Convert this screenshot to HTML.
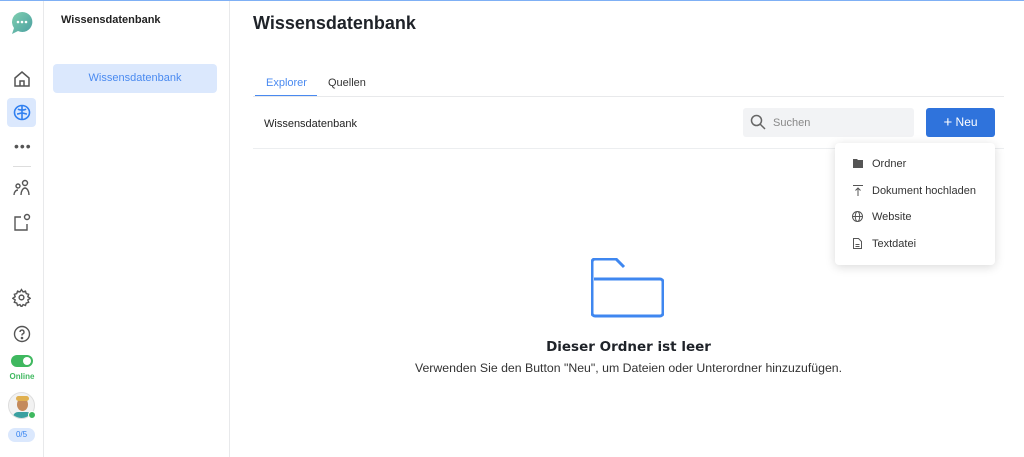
<!DOCTYPE html>
<html><head><meta charset="utf-8"><style>
*{box-sizing:border-box;margin:0;padding:0}
body{width:1024px;height:457px;overflow:hidden;background:#fff;font-family:"Liberation Sans",sans-serif;color:#1f2329;position:relative}
.top{position:absolute;left:0;top:0;width:1024px;height:1px;background:#7fb0f5}
.rail{position:absolute;left:0;top:1px;width:44px;height:456px;border-right:1px solid #e8e9eb}
.panel{position:absolute;left:44px;top:1px;width:186px;height:456px;border-right:1px solid #e8e9eb}
.ab{position:absolute}
svg{display:block}
</style></head><body>
<div class="top"></div>
<div class="rail">
 <svg class="ab" style="left:11px;top:10px" width="22" height="25" viewBox="0 0 22 25"><defs><linearGradient id="g" x1="0" y1="0" x2="1" y2="1"><stop offset="0" stop-color="#7fcfb0"/><stop offset="1" stop-color="#4a9ea0"/></linearGradient></defs><path d="M11 1a10 10 0 1 1-4 19l-6 3 2-6A10 10 0 0 1 11 1z" fill="url(#g)"/><circle cx="7" cy="11" r="1.3" fill="#fff"/><circle cx="11" cy="11" r="1.3" fill="#fff"/><circle cx="15" cy="11" r="1.3" fill="#fff"/></svg>
 <svg class="ab" style="left:13px;top:69px" width="18" height="18" viewBox="0 0 18 18" fill="none" stroke="#555" stroke-width="1.5"><path d="M2 8l7-6 7 6v8H2z"/><path d="M7 16v-5h4v5"/></svg>
 <div class="ab" style="left:7px;top:97px;width:29px;height:29px;background:#dbe8fd;border-radius:4px"></div>
 <svg class="ab" style="left:13px;top:103px" width="18" height="17" viewBox="0 0 18 17" fill="none" stroke="#2f7ff0" stroke-width="1.6"><ellipse cx="9" cy="8.5" rx="7.5" ry="7"/><path d="M9 2v13M5 5c1 1 2 1 4 1M13 5c-1 1-2 1-4 1M4 10c2 0 3-1 5-1M14 10c-2 0-3-1-5-1"/></svg>
 <div class="ab" style="left:14px;top:141px;font-size:14px;letter-spacing:1px;color:#555;line-height:8px">•••</div>
 <div class="ab" style="left:13px;top:165px;width:18px;height:1px;background:#ddd"></div>
 <svg class="ab" style="left:13px;top:178px" width="18" height="17" viewBox="0 0 18 17" fill="none" stroke="#555" stroke-width="1.4"><circle cx="12" cy="4" r="2.5"/><circle cx="5" cy="7" r="2"/><path d="M8 16c0-4 2-7 4-7s4 3 4 7M1 16c0-3 2-5 4-5"/></svg>
 <svg class="ab" style="left:13px;top:212px" width="18" height="18" viewBox="0 0 18 18" fill="none" stroke="#555" stroke-width="1.4"><path d="M8 4H2v13h12v-6"/><circle cx="14" cy="4" r="2.5"/></svg>
 <svg class="ab" style="left:12px;top:287px" width="19" height="19" viewBox="0 0 24 24" fill="none" stroke="#555" stroke-width="1.8"><circle cx="12" cy="12" r="3"/><path d="M12 2l2 3 3-1 1 3 3 1-1 3 3 2-3 2 1 3-3 1-1 3-3-1-2 3-2-3-3 1-1-3-3-1 1-3-3-2 3-2-1-3 3-1 1-3 3 1z"/></svg>
 <svg class="ab" style="left:13px;top:324px" width="18" height="18" viewBox="0 0 18 18" fill="none" stroke="#555" stroke-width="1.4"><circle cx="9" cy="9" r="7.5"/><path d="M7 7a2 2 0 1 1 2.5 2c-.5.2-.5.7-.5 1.5"/><circle cx="9" cy="13" r=".6" fill="#555"/></svg>
 <div class="ab" style="left:11px;top:354px;width:22px;height:12px;border-radius:6px;background:#3fb85f"><div style="position:absolute;right:2px;top:2px;width:8px;height:8px;border-radius:50%;background:#fff"></div></div>
 <div class="ab" style="left:0;top:371px;width:44px;text-align:center;font-size:8px;font-weight:bold;color:#3fb85f">Online</div>
 <div class="ab" style="left:8px;top:391px;width:27px;height:27px;border-radius:50%;border:1px solid #ddd;background:#f2f2f2;overflow:hidden"><div style="position:absolute;left:8px;top:5px;width:11px;height:13px;border-radius:50%;background:#c48a5c"></div><div style="position:absolute;left:7px;top:3px;width:13px;height:5px;border-radius:4px;background:#e0b050"></div><div style="position:absolute;left:4px;top:19px;width:19px;height:10px;border-radius:6px;background:#3aa0a0"></div></div>
 <div class="ab" style="left:28px;top:410px;width:8px;height:8px;border-radius:50%;background:#3fb85f;border:1px solid #fff"></div>
 <div class="ab" style="left:8px;top:427px;width:27px;height:14px;border-radius:7px;background:#dbe8fd;color:#2f7ff0;font-size:8px;text-align:center;line-height:14px">0/5</div>
</div>
<div class="panel">
 <div class="ab" style="left:17px;top:13px;font-size:11px;font-weight:bold;color:#222">Wissensdatenbank</div>
 <div class="ab" style="left:9px;top:63px;width:164px;height:29px;border-radius:4px;background:#dbe8fd;color:#4a8af0;font-size:11px;text-align:center;line-height:29px">Wissensdatenbank</div>
</div>
<div class="ab" style="left:253px;top:13px;font-size:18px;font-weight:bold;color:#1f2329">Wissensdatenbank</div>
<div class="ab" style="left:266px;top:77px;font-size:11px;color:#4a8af0">Explorer</div>
<div class="ab" style="left:328px;top:77px;font-size:11px;color:#333">Quellen</div>
<div class="ab" style="left:255px;top:95px;width:62px;height:2px;background:#4a8af0"></div>
<div class="ab" style="left:253px;top:96px;width:751px;height:1px;background:#e8e9eb"></div>
<div class="ab" style="left:264px;top:118px;font-size:11px;color:#222">Wissensdatenbank</div>
<div class="ab" style="left:253px;top:148px;width:751px;height:1px;background:#eceef0"></div>
<div class="ab" style="left:743px;top:108px;width:171px;height:29px;border-radius:3px;background:#f2f3f5"></div>
<svg class="ab" style="left:750px;top:114px" width="16" height="17" viewBox="0 0 16 17" fill="none" stroke="#666" stroke-width="1.5"><circle cx="6.5" cy="6.5" r="5"/><path d="M10 10l5 5"/></svg>
<div class="ab" style="left:773px;top:117px;font-size:11px;color:#888">Suchen</div>
<div class="ab" style="left:926px;top:108px;width:69px;height:29px;border-radius:3px;background:#2f73dc;color:#fff;font-size:12px;line-height:29px;text-align:center"><span style="font-size:15px;vertical-align:-1px">+</span> Neu</div>
<div class="ab" style="left:835px;top:143px;width:160px;height:122px;border-radius:4px;background:#fff;box-shadow:0 2px 10px rgba(0,0,0,.15)"></div>
<svg class="ab" style="left:853px;top:159px" width="10" height="9" viewBox="0 0 10 9"><path d="M0 0h4l1 1h5v8H0z" fill="#555"/></svg>
<svg class="ab" style="left:853px;top:185px" width="10" height="11" viewBox="0 0 10 11" fill="none" stroke="#555" stroke-width="1"><path d="M0 .5h10M5 3v8M2.5 5.5L5 3l2.5 2.5"/></svg>
<svg class="ab" style="left:852px;top:211px" width="11" height="11" viewBox="0 0 11 11" fill="none" stroke="#555" stroke-width="1"><circle cx="5.5" cy="5.5" r="5"/><ellipse cx="5.5" cy="5.5" rx="2.2" ry="5"/><path d="M.5 5.5h10"/></svg>
<svg class="ab" style="left:853px;top:238px" width="9" height="11" viewBox="0 0 9 11" fill="none" stroke="#555" stroke-width="1"><path d="M.5.5h5l3 3v7h-8z"/><path d="M2.5 6.5h4M2.5 8.5h4"/></svg>
<div class="ab" style="left:872px;top:158px;font-size:11px;color:#333">Ordner</div>
<div class="ab" style="left:872px;top:185px;font-size:11px;color:#333">Dokument hochladen</div>
<div class="ab" style="left:872px;top:211px;font-size:11px;color:#333">Website</div>
<div class="ab" style="left:872px;top:238px;font-size:11px;color:#333">Textdatei</div>
<svg class="ab" style="left:591px;top:258px" width="73" height="60" viewBox="0 0 73 60" fill="none" stroke="#3f87f0" stroke-width="3"><path d="M3 21h66a3 3 0 0 1 3 3v31a3 3 0 0 1-3 3H4a3 3 0 0 1-3-3V4a3 3 0 0 1 3-3h21l8 8"/><path d="M1 14v7"/></svg>
<div class="ab" style="left:253px;top:339px;width:751px;text-align:center;font-family:'DejaVu Sans',sans-serif;font-size:13.5px;font-weight:bold;color:#1f2329">Dieser Ordner ist leer</div>
<div class="ab" style="left:253px;top:361px;width:751px;text-align:center;font-size:12.3px;color:#333">Verwenden Sie den Button "Neu", um Dateien oder Unterordner hinzuzufügen.</div>
</body></html>
